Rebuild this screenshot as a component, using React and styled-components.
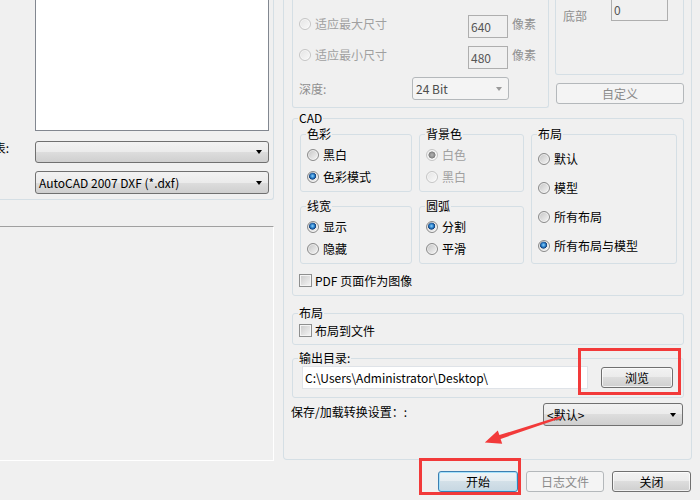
import React from "react";
import styled, { createGlobalStyle, css } from "styled-components";

const GlobalStyle = createGlobalStyle`
  html, body { margin: 0; padding: 0; background: #f0f0f0; }
  body {
    font-family: "Noto Sans CJK SC", "Noto Sans", "Liberation Sans", sans-serif;
    font-size: 12px;
    color: #000;
  }
`;

const Window = styled.div`
  position: relative;
  width: 700px;
  height: 500px;
  overflow: hidden;
  background: #f0f0f0;
`;

const Main = styled.div`
  display: flex;
  align-items: flex-start;
  gap: 9px;
  height: 461px;
`;

// left side: file list + format combos
const LeftCol = styled.div`
  width: 274px;
  flex-shrink: 0;
  display: flex;
  flex-direction: column;
`;

const FileGroup = styled.div`
  box-sizing: border-box;
  height: 200px;
  display: flex;
  flex-direction: column;
  padding: 0 4px 5px 0;
  border-right: 1px solid #d5dfe5;
  border-bottom: 1px solid #d5dfe5;
  border-bottom-right-radius: 3px;
`;

const ListRow = styled.div`
  flex: 1;
  display: flex;
  padding-left: 35px;
`;

const ListBox = styled.div`
  flex: 1;
  background: #fff;
  border: 1px solid #828790;
  border-top: none;
`;

const FileRow = styled.div`
  display: grid;
  grid-template-columns: 35px 1fr;
  align-items: center;
  margin-top: ${(p) => p.$mt}px;
`;

const CutLabel = styled.span`
  align-self: start;
  display: flex;
  justify-content: flex-end;
  min-width: 0;
  padding-right: 26px;
  line-height: 14px;
  white-space: nowrap;
`;

const LowerPanel = styled.div`
  box-sizing: border-box;
  height: 235px;
  margin-top: 26px;
  border-top: 1px solid #a0a0a0;
  border-right: 1px solid #fff;
  border-bottom: 1px solid #fff;
`;

// right side
const RightPanel = styled.div`
  box-sizing: border-box;
  width: 409px;
  height: 460px;
  flex-shrink: 0;
  display: flex;
  flex-direction: column;
  padding: 0 7px 0 8px;
  border: 1px solid #d5dfe5;
  border-top: none;
  border-radius: 0 0 4px 4px;
`;

const TopRow = styled.div`
  display: flex;
  align-items: flex-start;
  gap: 6px;
  height: 108px;
`;

const OpenBox = styled.div`
  box-sizing: border-box;
  width: ${(p) => p.$w}px;
  height: ${(p) => p.$h}px;
  border: 1px solid #d5dfe5;
  border-top: none;
  border-radius: 0 0 3px 3px;
`;

const SizeBox = styled(OpenBox)`
  display: flex;
  flex-direction: column;
  gap: 8px;
  padding: 15px 0 7px 6px;
`;

const SizeRow = styled.div`
  display: grid;
  grid-template-columns: 169px 40px auto;
  align-items: start;
  height: 23px;
`;

const DepthRow = styled.div`
  display: grid;
  grid-template-columns: 113px 97px;
  align-items: center;
  height: 23px;
`;

const Muted = styled.span`
  color: #8f8f8f;
  line-height: 17px;
  white-space: nowrap;
  margin-left: ${(p) => p.$ml || 0}px;
  padding-top: ${(p) => p.$pt || 0}px;
`;

const SideCol = styled.div`
  width: 129px;
  display: flex;
  flex-direction: column;
  gap: 8px;
`;

const MarginBox = styled(OpenBox)`
  padding-left: 7px;
`;

const MarginRow = styled.div`
  display: grid;
  grid-template-columns: 48px 57px;
  align-items: start;
  margin-top: -2px;
`;

// group box; --pl keeps the caption 7px in from the border whatever the padding
const Group = styled.fieldset`
  --pl: ${(p) => p.$pl ?? 6}px;
  box-sizing: border-box;
  min-width: 0;
  margin: ${(p) => p.$mt || 0}px 0 0;
  padding: ${(p) => p.$pt || 0}px ${(p) => p.$pr ?? 6}px ${(p) => p.$pb || 0}px var(--pl);
  border: 1px solid #d5dfe5;
  border-radius: 3px;
  ${(p) =>
    p.$tall &&
    css`
      grid-row: span 2;
    `}
`;

const Legend = styled.legend`
  margin-left: calc(5px - var(--pl));
  padding: 0 1px;
  height: 14px;
  line-height: 14px;
  color: #000;
`;

const CadGrid = styled.div`
  display: grid;
  grid-template-columns: 112px 105px 146px;
  gap: 7px;
  margin-top: 2px;
  padding-left: 1px;
`;

const OptionList = styled.div`
  display: flex;
  flex-direction: column;
  gap: ${(p) => p.$gap || 5}px;
`;

const Option = styled.div`
  display: flex;
  align-items: center;
  gap: ${(p) => p.$gap || 4}px;
  height: 17px;
  line-height: 17px;
  white-space: nowrap;
  color: ${(p) => (p.$disabled ? "#a0a0a0" : "#000")};
  margin-top: ${(p) => p.$mt || 0}px;
`;

const Radio = styled.span`
  box-sizing: border-box;
  width: 12px;
  height: 12px;
  flex-shrink: 0;
  border-radius: 50%;
  border: 1px solid ${(p) => (p.$disabled ? "#c6c6c6" : "#8a8a8a")};
  box-shadow: inset 0 0 0 1px rgba(255, 255, 255, 0.55);
  background: ${(p) => {
    const base = p.$disabled
      ? "linear-gradient(135deg, #e4e4e4, #f9f9f9)"
      : "linear-gradient(135deg, #c4c4c4, #f7f7f7)";
    if (!p.$checked) return base;
    const dot = p.$disabled
      ? "radial-gradient(circle, #b5b5b5 0, #8c8c8c 2.5px, #7a7a7a 3.2px, transparent 3.8px)"
      : "radial-gradient(circle at 45% 40%, #8fd2fa 0, #2b80cc 2px, #123f78 3.3px, transparent 3.9px)";
    return `${dot}, ${base}`;
  }};
`;

const Check = styled.span`
  box-sizing: border-box;
  width: 13px;
  height: 13px;
  flex-shrink: 0;
  border: 1px solid #8e8f8f;
  box-shadow: inset 0 0 0 1px #f4f4f4;
  background: linear-gradient(135deg, #c9c9c9, #f6f6f6);
`;

const TextBox = styled.div`
  box-sizing: border-box;
  width: ${(p) => p.$w}px;
  height: 23px;
  display: flex;
  align-items: center;
  padding: 0 2px;
  white-space: nowrap;
  border: 1px solid ${(p) => (p.$disabled ? "#aeaeae" : "#dfe3e8")};
  background: ${(p) => (p.$disabled ? "#f0f0f0" : "#fff")};
  color: ${(p) => (p.$disabled ? "#555" : "#000")};
`;

const Combo = styled.div`
  box-sizing: border-box;
  width: ${(p) => (p.$w ? `${p.$w}px` : "auto")};
  height: ${(p) => p.$h || 22}px;
  display: flex;
  align-items: center;
  padding: 0 6px 0 3px;
  white-space: nowrap;
  border-radius: 3px;
  border: 1px solid ${(p) => (p.$disabled ? "#b4b8bb" : "#707070")};
  background: ${(p) =>
    p.$disabled
      ? "#f4f4f4"
      : "linear-gradient(#f2f2f2 0%, #ebebeb 50%, #dddddd 50%, #cfcfcf 100%)"};
  color: ${(p) => (p.$disabled ? "#4d4d4d" : "#000")};
  margin-right: ${(p) => p.$mr || 0}px;

  &::after {
    content: "";
    margin-left: auto;
    border-left: 3.5px solid transparent;
    border-right: 3.5px solid transparent;
    border-top: 4px solid ${(p) => (p.$disabled ? "#9a9a9a" : "#000")};
  }
`;

const Button = styled.button`
  box-sizing: border-box;
  width: ${(p) => p.$w}px;
  height: 21px;
  padding: 0;
  margin: 0 0 0 ${(p) => p.$ml || 0}px;
  font: inherit;
  border-radius: 3px;
  display: flex;
  align-items: center;
  justify-content: center;
  color: #000;
  border: 1px solid #707070;
  box-shadow: inset 0 0 0 1px rgba(255, 255, 255, 0.7);
  background: linear-gradient(#f2f2f2 0%, #ebebeb 50%, #dddddd 50%, #cfcfcf 100%);

  ${(p) =>
    p.$kind === "default" &&
    css`
      border-color: #3c7fb1;
      box-shadow: inset 0 0 0 1px #a6e1fb;
      background: linear-gradient(#eef4f7 0%, #e4ecf1 50%, #d3e0e8 50%, #c7d7e2 100%);
    `}
  ${(p) =>
    p.$kind === "disabled" &&
    css`
      color: #8b8b8b;
      border-color: #b4b8bb;
      box-shadow: none;
      background: #f4f4f4;
    `}
`;

const OutputRow = styled.div`
  display: flex;
  align-items: center;
  justify-content: space-between;
`;

const SettingsRow = styled.div`
  display: flex;
  align-items: flex-start;
  justify-content: space-between;
  margin-top: 5px;
`;

const SettingsLabel = styled.span`
  margin-left: -1px;
  line-height: 17px;
  white-space: nowrap;
`;

const ButtonBar = styled.div`
  display: flex;
  justify-content: flex-end;
  gap: 8px;
  padding: 10px 9px 0 0;
`;

// red annotations drawn over the screenshot
const Mark = styled.div`
  position: absolute;
  left: ${(p) => p.$x}px;
  top: ${(p) => p.$y}px;
  width: ${(p) => p.$w}px;
  height: ${(p) => p.$h}px;
  box-sizing: border-box;
  border: 3px solid #f23a3a;
  pointer-events: none;
`;

const ArrowLayer = styled.svg`
  position: absolute;
  left: 0;
  top: 0;
  pointer-events: none;
`;

const RadioOption = ({ label, checked, disabled }) => (
  <Option $disabled={disabled}>
    <Radio $checked={checked} $disabled={disabled} />
    {label}
  </Option>
);

const CheckOption = ({ label, mt }) => (
  <Option $gap={3} $mt={mt}>
    <Check />
    {label}
  </Option>
);

export default function App() {
  return (
    <Window>
      <GlobalStyle />
      <Main>
        <LeftCol>
          <FileGroup>
            <ListRow>
              <ListBox />
            </ListRow>
            <FileRow $mt={10}>
              <CutLabel>列表:</CutLabel>
              <Combo />
            </FileRow>
            <FileRow $mt={8}>
              <span />
              <Combo $h={23}>AutoCAD 2007 DXF (*.dxf)</Combo>
            </FileRow>
          </FileGroup>
          <LowerPanel />
        </LeftCol>

        <RightPanel>
          <TopRow>
            <SizeBox $w={257} $h={108}>
              <SizeRow>
                <RadioOption label="适应最大尺寸" disabled />
                <TextBox $w={40} $disabled>640</TextBox>
                <Muted $ml={4}>像素</Muted>
              </SizeRow>
              <SizeRow>
                <RadioOption label="适应最小尺寸" disabled />
                <TextBox $w={40} $disabled>480</TextBox>
                <Muted $ml={4}>像素</Muted>
              </SizeRow>
              <DepthRow>
                <Muted>深度:</Muted>
                <Combo $h={23} $disabled>
                  24 Bit
                </Combo>
              </DepthRow>
            </SizeBox>
            <SideCol>
              <MarginBox $w={129} $h={75}>
                <MarginRow>
                  <Muted $pt={9}>底部</Muted>
                  <TextBox $w={57} $disabled>
                    0
                  </TextBox>
                </MarginRow>
              </MarginBox>
              <Button $w={128} $ml={1} $kind="disabled">
                自定义
              </Button>
            </SideCol>
          </TopRow>

          <Group $mt={3} $pb={6}>
            <Legend>CAD</Legend>
            <CadGrid>
              <Group $pt={5} $pb={6}>
                <Legend>色彩</Legend>
                <OptionList>
                  <RadioOption label="黑白" />
                  <RadioOption label="色彩模式" checked />
                </OptionList>
              </Group>
              <Group $pt={5} $pb={6}>
                <Legend>背景色</Legend>
                <OptionList>
                  <RadioOption label="白色" checked disabled />
                  <RadioOption label="黑白" disabled />
                </OptionList>
              </Group>
              <Group $pt={9} $tall>
                <Legend>布局</Legend>
                <OptionList $gap={12}>
                  <RadioOption label="默认" />
                  <RadioOption label="模型" />
                  <RadioOption label="所有布局" />
                  <RadioOption label="所有布局与模型" checked />
                </OptionList>
              </Group>
              <Group $pt={5} $pb={6}>
                <Legend>线宽</Legend>
                <OptionList>
                  <RadioOption label="显示" checked />
                  <RadioOption label="隐藏" />
                </OptionList>
              </Group>
              <Group $pt={5} $pb={6}>
                <Legend>圆弧</Legend>
                <OptionList>
                  <RadioOption label="分割" checked />
                  <RadioOption label="平滑" />
                </OptionList>
              </Group>
            </CadGrid>
            <CheckOption label="PDF 页面作为图像" mt={8} />
          </Group>

          <Group $mt={10} $pt={2} $pb={5}>
            <Legend>布局</Legend>
            <CheckOption label="布局到文件" />
          </Group>

          <Group $mt={6} $pt={1} $pb={8} $pl={9} $pr={10}>
            <Legend>输出目录:</Legend>
            <OutputRow>
              <TextBox $w={286}>{"C:\\Users\\Administrator\\Desktop\\"}</TextBox>
              <Button $w={72}>浏览</Button>
            </OutputRow>
          </Group>

          <SettingsRow>
            <SettingsLabel>保存/加载转换设置：:</SettingsLabel>
            <Combo $w={140} $h={23} $mr={1}>
              &lt;默认&gt;
            </Combo>
          </SettingsRow>
        </RightPanel>
      </Main>

      <ButtonBar>
        <Button $w={80} $kind="default">
          开始
        </Button>
        <Button $w={78} $kind="disabled">
          日志文件
        </Button>
        <Button $w={79}>关闭</Button>
      </ButtonBar>

      <Mark $x={578} $y={348} $w={103} $h={47} />
      <Mark $x={419} $y={458} $w={102} $h={37} />
      <ArrowLayer width="700" height="500" viewBox="0 0 700 500">
        <polygon
          points="484.8,442.4 497.8,430.4 499.4,435.1 560.7,416.1 561.3,418 500.6,438.9 502.2,443.7"
          fill="#f23a3a"
        />
      </ArrowLayer>
    </Window>
  );
}
